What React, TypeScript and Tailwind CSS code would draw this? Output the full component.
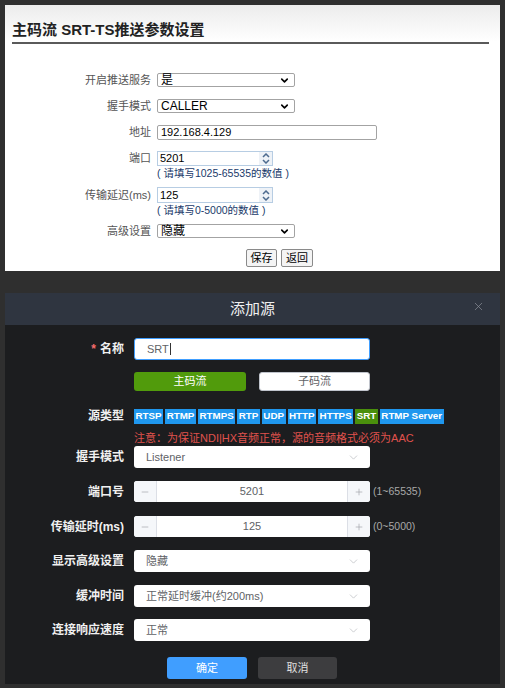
import { ChevronDown, X, Minus, Plus } from 'lucide-react';

const cjk = { fontFamily: '"Liberation Sans", "Noto Sans CJK SC", sans-serif' };

const OldSelect = ({ value, w }: { value: string; w: string }) => (
  <div className={`${w} h-[14px] border border-[#a3a3a3] rounded-[2px] bg-white flex items-center justify-between pl-[3px] pr-[4px] text-[12px] text-black leading-none`}>
    <span>{value}</span>
    <ChevronDown size={11} strokeWidth={3.5} className="text-black" />
  </div>
);

const OldNumber = ({ value, h }: { value: string; h: string }) => (
  <div className={`w-[116px] ${h} border border-[#b7cde3] bg-white flex items-center justify-between text-[11px] text-black leading-none`}>
    <span className="pl-[2px]">{value}</span>
    <div className="h-full w-[13px] bg-[#eef2f7] flex flex-col items-center justify-center text-[#4d6b8f]">
      <svg width="8" height="5" viewBox="0 0 8 5"><path d="M1 4 L4 1 L7 4" fill="none" stroke="currentColor" strokeWidth="1.5" /></svg>
      <svg width="8" height="5" viewBox="0 0 8 5" className="mt-[1px]"><path d="M1 1 L4 4 L7 1" fill="none" stroke="currentColor" strokeWidth="1.5" /></svg>
    </div>
  </div>
);

const OldRow = ({ label, children, className = '' }: { label: string; children: React.ReactNode; className?: string }) => (
  <div className={`flex items-center ${className}`}>
    <div className="w-[146px] text-right text-[11px] leading-none text-[#555]">{label}</div>
    <div className="ml-[6px] flex">{children}</div>
  </div>
);

const Hint = ({ text }: { text: string }) => (
  <div className="ml-[152px] mt-[1px] text-[10.5px] leading-[12px] text-[#1a3a6a]">{text}</div>
);

const DarkSelect = ({ value }: { value: string }) => (
  <div className="w-[236px] h-[22px] bg-white rounded-[3px] flex items-center justify-between pl-[12px] pr-[10px] text-[11px] text-[#606266]">
    <span>{value}</span>
    <ChevronDown size={13} strokeWidth={1.2} className="text-[#b0b3b8]" />
  </div>
);

const DarkNumber = ({ value }: { value: string }) => (
  <div className="w-[236px] h-[21px] bg-white rounded-[3px] flex items-stretch text-[11px] text-[#606266] overflow-hidden">
    <div className="w-[23px] bg-[#f5f7fa] border-r border-[#dcdfe6] flex items-center justify-center text-[#9a9da3]">
      <Minus size={10} strokeWidth={1.5} />
    </div>
    <div className="flex-1 flex items-center justify-center">{value}</div>
    <div className="w-[23px] bg-[#f5f7fa] border-l border-[#dcdfe6] flex items-center justify-center text-[#9a9da3]">
      <Plus size={10} strokeWidth={1.5} />
    </div>
  </div>
);

const DarkRow = ({ label, children, className = '' }: { label: React.ReactNode; children: React.ReactNode; className?: string }) => (
  <div className={`flex items-center ${className}`}>
    <div className="w-[119px] text-right text-[12px] font-bold text-[#f0f0f0]">{label}</div>
    <div className="ml-[10px] flex items-center">{children}</div>
  </div>
);

const tags = ['RTSP', 'RTMP', 'RTMPS', 'RTP', 'UDP', 'HTTP', 'HTTPS', 'SRT', 'RTMP Server'];

export default function App() {
  return (
    <div className="w-[505px] h-[688px] bg-[#2f2f2f] overflow-hidden pt-[5px] px-[5px]" style={cjk}>
      <div className="h-[266px] bg-white">
        <div className="h-[37px] bg-gradient-to-b from-[#ececec] to-white px-[7px] pt-[16px]">
          <div className="text-[15px] font-bold text-[#222] leading-[18px]">主码流 SRT-TS推送参数设置</div>
        </div>
        <div className="mx-[7px] mr-[11px] h-[2px] bg-[#5a5a5a]" />
        <div className="pt-[29px]">
          <OldRow label="开启推送服务"><OldSelect value="是" w="w-[138px]" /></OldRow>
          <OldRow label="握手模式" className="mt-[12px]"><OldSelect value="CALLER" w="w-[138px]" /></OldRow>
          <OldRow label="地址" className="mt-[12px]">
            <div className="w-[220px] h-[15px] border border-[#a3a3a3] rounded-[2px] flex items-center pl-[3px] text-[11px] leading-none text-black">192.168.4.129</div>
          </OldRow>
          <OldRow label="端口" className="mt-[11px]"><OldNumber value="5201" h="h-[15px]" /></OldRow>
          <Hint text="( 请填写1025-65535的数值 )" />
          <OldRow label="传输延迟(ms)" className="mt-[8px]"><OldNumber value="125" h="h-[16px]" /></OldRow>
          <Hint text="( 请填写0-5000的数值 )" />
          <OldRow label="高级设置" className="mt-[8px]"><OldSelect value="隐藏" w="w-[138px]" /></OldRow>
          <div className="mt-[11px] ml-[241px] flex gap-[4px]">
            <div className="w-[31px] h-[18px] border border-[#8a8a8a] rounded-[2px] bg-[#f4f4f4] text-[11px] flex items-center justify-center text-black">保存</div>
            <div className="w-[32px] h-[18px] border border-[#8a8a8a] rounded-[2px] bg-[#f4f4f4] text-[11px] flex items-center justify-center text-black">返回</div>
          </div>
        </div>
      </div>

      <div className="mt-[22px] h-[391px] bg-[#1c1d1f]">
        <div className="h-[32px] bg-[#2f3540] flex items-center justify-center relative">
          <span className="text-[15px] text-[#f0f0f0]">添加源</span>
          <X size={13} strokeWidth={1.3} className="absolute right-[15px] top-[7px] text-[#8c9099]" />
        </div>
        <div className="pt-[13px]">
          <DarkRow label={<><span className="text-[#f56c6c] mr-[4px]">*</span>名称</>}>
            <div className="w-[236px] h-[22px] bg-white rounded-[3px] border border-[#409eff] flex items-center pl-[12px] text-[11px] text-[#606266]">
              SRT<span className="ml-[1px] w-[1px] h-[12px] bg-[#333]" />
            </div>
          </DarkRow>
          <div className="mt-[12px] ml-[129px] flex gap-[13px]">
            <div className="w-[112px] h-[19px] rounded-[3px] bg-[#519b0c] text-white text-[11px] flex items-center justify-center">主码流</div>
            <div className="w-[111px] h-[19px] rounded-[3px] bg-white border border-[#c0c4cc] text-[#606266] text-[11px] flex items-center justify-center">子码流</div>
          </div>
          <DarkRow label="源类型" className="mt-[16px]">
            <div className="flex gap-[2px]">
              {tags.map((t) => (
                <div key={t} className={`h-[15px] px-[1.5px] flex items-center text-[9.8px] font-bold text-white ${t === 'SRT' ? 'bg-[#4a8f0c]' : 'bg-[#1f97ee]'}`}>{t}</div>
              ))}
            </div>
          </DarkRow>
          <div className="ml-[129px] mt-[6px] text-[11px] leading-[14px] text-[#e0524d]">注意：为保证NDI|HX音频正常，源的音频格式必须为AAC</div>
          <DarkRow label="握手模式" className="mt-[1px]"><DarkSelect value="Listener" /></DarkRow>
          <DarkRow label="端口号" className="mt-[13px]">
            <DarkNumber value="5201" />
            <span className="ml-[3px] text-[10.5px] text-[#a8a8a8]">(1~65535)</span>
          </DarkRow>
          <DarkRow label="传输延时(ms)" className="mt-[14px]">
            <DarkNumber value="125" />
            <span className="ml-[3px] text-[10.5px] text-[#a8a8a8]">(0~5000)</span>
          </DarkRow>
          <DarkRow label="显示高级设置" className="mt-[13px]"><DarkSelect value="隐藏" /></DarkRow>
          <DarkRow label="缓冲时间" className="mt-[13px]"><DarkSelect value="正常延时缓冲(约200ms)" /></DarkRow>
          <DarkRow label="连接响应速度" className="mt-[12px]"><DarkSelect value="正常" /></DarkRow>
          <div className="mt-[16px] ml-[162px] flex gap-[11px]">
            <div className="w-[80px] h-[22px] rounded-[3px] bg-[#409eff] text-white text-[11px] flex items-center justify-center">确定</div>
            <div className="w-[79px] h-[22px] rounded-[3px] bg-[#3d3d3f] text-[#e0e0e0] text-[11px] flex items-center justify-center">取消</div>
          </div>
        </div>
      </div>
    </div>
  );
}
